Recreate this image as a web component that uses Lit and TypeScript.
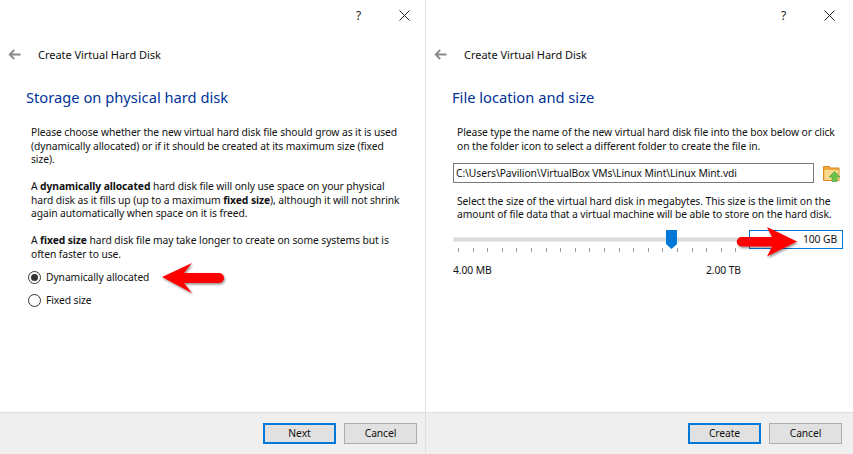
import { LitElement, html, css, svg } from "lit";
import { customElement } from "lit/decorators.js";

const closeIcons = html`<div class="winbar">
  <span class="help">?</span>
  <svg class="close" width="11" height="11" viewBox="0 0 11 11"><path d="M.5.5l10 10M10.5.5l-10 10" stroke="#222" stroke-width="1" fill="none"/></svg>
</div>`;

const head = html`<div class="head">
  <svg class="back" width="13" height="11" viewBox="0 0 13 11"><path d="M12.5 5.500H2M6.200 1L1.700 5.500 6.200 10" stroke="#8a8a8a" stroke-width="1.800" fill="none"/></svg>
  <span>Create Virtual Hard Disk</span>
</div>`;

const arrowFilter = svg`<filter id="s" x="-20%" y="-20%" width="150%" height="150%"><feDropShadow dx="1" dy="1.500" stdDeviation="1.200" flood-color="#000" flood-opacity=".45"/></filter>`;

@customElement("app-root")
export class AppRoot extends LitElement {
  static styles = css`
    :host { display: flex; width: 853px; height: 454px; background: #fff; position: relative; overflow: hidden;
      font-family: "Noto Sans", sans-serif; font-size: 10.3px; letter-spacing: -0.08px; color: #111; }
    .dlg { display: flex; flex-direction: column; height: 454px; box-sizing: border-box; }
    .dlg.l { width: 425px; }
    .dlg.r { width: 428px; border-left: 1px solid #dfdfdf; }
    .winbar { height: 31px; display: flex; justify-content: flex-end; align-items: center; gap: 35px; padding-right: 15px; }
    .r .winbar { padding-right: 18px; }
    .winbar .help { font-size: 12px; color: #222; width: 8px; }
    .head { display: flex; align-items: center; height: 18px; padding-left: 8px; gap: 17px; font-size: 11px; letter-spacing: -0.03px; color: #111; margin-top: 14px; }
    .body { flex: 1; padding: 0 0 0 26px; min-height: 0; white-space: nowrap; }
    h2 { margin: 24px 0 0; font-weight: 400; font-size: 14.7px; letter-spacing: 0; line-height: 20px; color: #003399; }
    p { margin: 0; line-height: 13.500px; padding-left: 5px; }
    .t1 { margin-top: 19px; }
    .t2 { margin-top: 13.500px; }
    .radio { display: flex; align-items: center; gap: 5px; height: 14px; padding-left: 2px; margin-top: 9px; }
    .radio + .radio { margin-top: 9px; }
    .dot { width: 11px; height: 11px; border: 1px solid #333; border-radius: 50%; display: flex; align-items: center; justify-content: center; }
    .dot.on::after { content: ""; width: 7px; height: 7px; border-radius: 50%; background: #333; }
    .file { display: flex; align-items: center; gap: 9px; margin: 10px 0 0 1px; }
    .field { flex: none; width: 361px; height: 20px; box-sizing: border-box; border: 1px solid #7a7a7a; line-height: 18px; padding-left: 2px; overflow: hidden; }
    .next { margin-top: 11.500px; }
    .sizer { display: flex; align-items: flex-start; margin: 8.500px 0 0 1px; }
    .slider { width: 296px; flex: none; display: flex; flex-direction: column; }
    .track { height: 3px; background: #dcdcdc; border: 1px solid #e8e8e8; margin-top: 7px; position: relative; width: 292px; }
    .thumb { position: absolute; left: 212px; top: -8px; }
    .ticks { display: flex; margin-top: 6px; padding-left: 5px; }
    .ticks i { width: 1px; height: 4px; background: #9a9a9a; margin-right: 13.600px; flex: none; }
    .labels { display: flex; margin-top: 11px; }
    .labels span:first-child { width: 253px; }
    .size { flex: none; width: 94px; height: 19px; box-sizing: border-box; border: 1px solid #0078d7; text-align: right; line-height: 17px; padding-right: 5px; }
    .foot { height: 42px; background: #efefef; border-top: 1px solid #dfdfdf; box-sizing: border-box; display: flex; justify-content: flex-end; align-items: center; gap: 8px; padding-right: 8px; }
    .r .foot { padding-right: 11px; }
    .btn { width: 73px; height: 21px; box-sizing: border-box; background: #e1e1e1; border: 1px solid #adadad; text-align: center; line-height: 19px; color: #111; }
    .btn.def { border: 2px solid #0078d7; line-height: 17px; }
    .arrow { position: absolute; overflow: visible; }
    .a1 { left: 160px; top: 262px; }
    .a2 { left: 737px; top: 226px; }
  `;

  render() {
    return html`
      <div class="dlg l">
        ${closeIcons}${head}
        <div class="body">
          <h2>Storage on physical hard disk</h2>
          <p class="t1">Please choose whether the new virtual hard disk file should grow as it is used<br>(dynamically allocated) or if it should be created at its maximum size (fixed<br>size).</p>
          <p class="t2">A <b>dynamically allocated</b> hard disk file will only use space on your physical<br>hard disk as it fills up (up to a maximum <b>fixed size</b>), although it will not shrink<br>again automatically when space on it is freed.</p>
          <p class="t2">A <b>fixed size</b> hard disk file may take longer to create on some systems but is<br>often faster to use.</p>
          <div class="radio"><span class="dot on"></span>Dynamically allocated</div>
          <div class="radio"><span class="dot"></span>Fixed size</div>
        </div>
        <div class="foot"><div class="btn def">Next</div><div class="btn">Cancel</div></div>
      </div>
      <div class="dlg r">
        ${closeIcons}${head}
        <div class="body">
          <h2>File location and size</h2>
          <p class="t1">Please type the name of the new virtual hard disk file into the box below or click<br>on the folder icon to select a different folder to create the file in.</p>
          <div class="file">
            <div class="field">C:\\Users\\Pavilion\\VirtualBox VMs\\Linux Mint\\Linux Mint.vdi</div>
            <svg width="17" height="17" viewBox="0 0 17 17">
              <path d="M.5 1.500h6l1 1.500h8.500v12.500H.5z" fill="#f2a93b" stroke="#d98a26" stroke-width="1"/>
              <path d="M1.500 5h14v10h-14z" fill="#f9d98e"/>
              <path d="M11.500 6.500L16.800 12h-3v4.500h-4.600V12h-3z" fill="#6cc24a" stroke="#4aa332" stroke-width=".7"/>
            </svg>
          </div>
          <p class="next">Select the size of the virtual hard disk in megabytes. This size is the limit on the<br>amount of file data that a virtual machine will be able to store on the hard disk.</p>
          <div class="sizer">
            <div class="slider">
              <div class="track">
                <svg class="thumb" width="11" height="19" viewBox="0 0 11 19"><path d="M0 0h11v14l-5.500 5L0 14z" fill="#0078d7"/></svg>
              </div>
              <div class="ticks">${Array.from({ length: 20 }, () => html`<i></i>`)}</div>
              <div class="labels"><span>4.00 MB</span><span>2.00 TB</span></div>
            </div>
            <div class="size">100 GB</div>
          </div>
        </div>
        <div class="foot"><div class="btn def">Create</div><div class="btn">Cancel</div></div>
      </div>
      <svg class="arrow a1" width="66" height="34" viewBox="0 0 66 34">
        <defs>${arrowFilter}</defs>
        <path filter="url(#s)" d="M2 15L32 1l-8 10h35a5 5 0 0 1 0 10H24l8 10z" fill="#f00"/>
      </svg>
      <svg class="arrow a2" width="66" height="34" viewBox="0 0 66 34">
        <defs>${arrowFilter}</defs>
        <path filter="url(#s)" d="M60 15.500L30 1l5 10H4.500a4.750 4.750 0 0 0 0 9.500H35l-5 10z" fill="#f00"/>
      </svg>
    `;
  }
}
